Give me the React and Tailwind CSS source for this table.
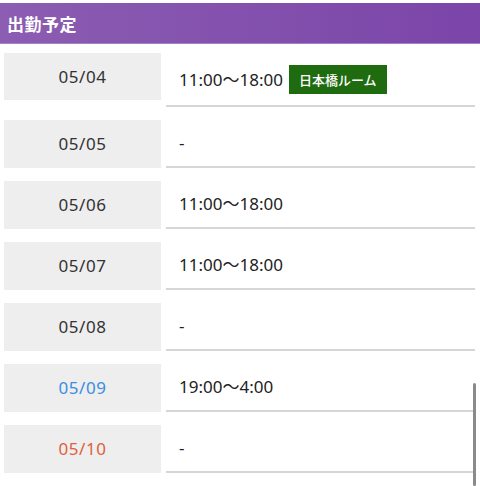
import React from "react";

const rows = [
  { d: "05/04", t: "11:00〜18:00", badge: "日本橋ルーム", c: "text-[#333333]" },
  { d: "05/05", t: "-", c: "text-[#333333]" },
  { d: "05/06", t: "11:00〜18:00", c: "text-[#333333]" },
  { d: "05/07", t: "11:00〜18:00", c: "text-[#333333]" },
  { d: "05/08", t: "-", c: "text-[#333333]" },
  { d: "05/09", t: "19:00〜4:00", c: "text-[#3b8de0]" },
  { d: "05/10", t: "-", c: "text-[#e0603c]" },
];

export default function App() {
  return (
    <div
      className="relative w-[480px] h-[486px] overflow-hidden bg-white"
      style={{ fontFamily: '"Noto Sans", "Noto Sans CJK JP", sans-serif' }}
    >
      <div className="pt-[3px]">
        <div className="h-[41px] flex items-center pl-[7px] bg-gradient-to-r from-[#8c5db2] to-[#7b45a9] border-b border-[#a284c4]">
          <span className="text-white font-bold text-[17px] leading-none tracking-[0.5px]" style={{ fontFamily: '"Noto Sans CJK JP", sans-serif' }}>出勤予定</span>
        </div>
      </div>
      <div className="flex flex-col gap-[13px] pt-[9px] pl-[4px] pr-[5px]">
        {rows.map((r, i) => (
          <div key={i} className="flex items-start gap-[5px]">
            <div className={`w-[157px] ${r.badge ? "h-[47px]" : "h-[48px]"} bg-[#eeeeee] flex items-center justify-center text-[17px] tracking-[0.6px] ${r.c}`}>
              {r.d}
            </div>
            <div
              className={`flex-1 flex items-center pl-[13px] border-b-2 border-[#d6d6d6] text-[17px] text-[#222222] ${r.badge ? "h-[54px] pt-[1px]" : "h-[48px]"}`}
            >
              <span>{r.t}</span>
              {r.badge && (
                <span
                  className="ml-[6px] h-[29px] px-[10px] flex items-center bg-[#1f6b10] text-white text-[13px] font-medium"
                  style={{ fontFamily: '"Noto Sans CJK JP", sans-serif' }}
                >
                  {r.badge}
                </span>
              )}
            </div>
          </div>
        ))}
      </div>
      <div className="absolute left-[473px] top-[383px] w-[3px] h-[103px] bg-[#8a8a8a] rounded-sm" />
    </div>
  );
}
